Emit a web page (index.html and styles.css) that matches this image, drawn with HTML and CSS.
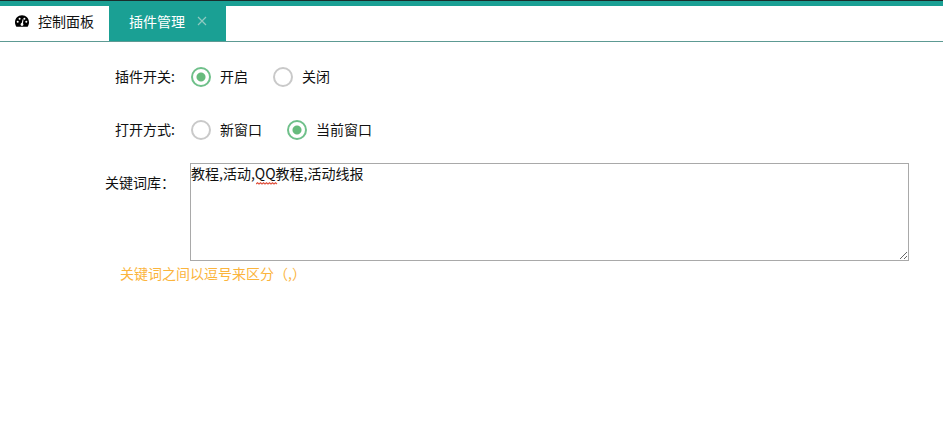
FILE: index.html
```html
<!DOCTYPE html>
<html lang="zh-CN">
  <head>
    <meta charset="UTF-8" />
    <title>插件管理</title>
    <link rel="stylesheet" href="styles.css">
  </head>

  <body>
    <!-- 顶部标签 -->
    <div class="tabs">
      <div class="tab">
        <svg class="tab-icon" width="14" height="12" viewBox="0 0 14 12">
          <path d="M7 0.200C3 0.200 0 3.300 0 7.300c0 1.600 0.500 3.100 1.400 4.400h11.200c0.900-1.300 1.400-2.800 1.400-4.400C14 3.300 11 0.200 7 0.200z" fill="#000" />
          <circle cx="2.700" cy="6.800" r="1" fill="#fff" />
          <circle cx="4.600" cy="3.800" r="1" fill="#fff" />
          <circle cx="9.400" cy="3.800" r="1" fill="#fff" />
          <circle cx="11.300" cy="6.800" r="1" fill="#fff" />
          <path d="M6.300 9.500 7.600 4.200 8.500 4.400 7.800 9.500z" fill="#fff" />
          <circle cx="7" cy="9.500" r="1.400" fill="#fff" />
        </svg>
        控制面板
      </div>
      <div class="tab active">
        插件管理
        <svg class="tab-close" width="10" height="10" viewBox="0 0 10 10">
          <path d="M1 1 9 9M9 1 1 9" stroke="#8fc9c0" stroke-width="1.200" fill="none" />
        </svg>
      </div>
    </div>

    <!-- 设置表单 -->
    <div class="form">
      <div class="row">
        <label class="row-label">插件开关:</label>
        <div class="radio checked">开启</div>
        <div class="radio">关闭</div>
      </div>

      <div class="row">
        <label class="row-label">打开方式:</label>
        <div class="radio">新窗口</div>
        <div class="radio checked">当前窗口</div>
      </div>

      <div class="keywords">
        <label class="keywords-label" for="keywords">关键词库：</label>
        <div class="keywords-box">
          <textarea id="keywords" spellcheck="false">教程,活动,QQ教程,活动线报</textarea>
          <svg class="squiggle" width="22" height="3" viewBox="0 0 22 3">
            <path d="M0 2 1.500 0.800 3 2 4.500 0.800 6 2 7.500 0.800 9 2 10.500 0.800 12 2 13.500 0.800 15 2 16.500 0.800 18 2 19.500 0.800 21 2" stroke="#e0503c" stroke-width="1.100" fill="none" />
          </svg>
        </div>
      </div>
      <p class="hint">关键词之间以逗号来区分（,）</p>
    </div>
  </body>
</html>
```

FILE: styles.css
```css
body {
  margin: 0;
  background-color: #fff;
  color: #111;
  font-family: "Noto Sans CJK SC", "Liberation Sans", sans-serif;
  font-size: 14px;
}

.tabs {
  display: flex;
  height: 35px;
  border-top: 1px solid #1a2e2c;
  padding-top: 5px;
  background-color: #fff;
  background-image: linear-gradient(#1aa094, #1aa094);
  background-repeat: no-repeat;
  background-size: 100% 5px;
  border-bottom: 1px solid #5d9a93;
}

.tab {
  display: flex;
  align-items: center;
  width: 109px;
  box-sizing: border-box;
  padding-left: 38px;
  padding-bottom: 5px;
  position: relative;
}

.tab-icon {
  position: absolute;
  left: 15px;
  top: 9px;
}

.tab.active {
  width: 117px;
  padding-left: 20px;
  background-color: #1aa094;
  color: #fff;
}

.tab-close {
  margin-left: 12px;
}

.form {
  padding-top: 15px;
}

.row {
  display: flex;
  align-items: center;
  height: 40px;
  margin-bottom: 13px;
}

.row-label {
  width: 175px;
  padding-bottom: 2px;
  text-align: right;
  margin-right: 16px;
}

.radio {
  display: flex;
  align-items: center;
  padding-bottom: 2px;
  margin-right: 25px;
}

.radio::before {
  content: "";
  width: 20px;
  height: 20px;
  box-sizing: border-box;
  border: 2px solid #c9c9c9;
  border-radius: 50%;
  margin-top: 2px;
  margin-right: 9px;
}

.radio.checked::before {
  border-color: #6fc08a;
  background: radial-gradient(circle, #66bb7c 0, #66bb7c 4px, #fff 5px);
}

.keywords {
  display: flex;
}

.keywords-label {
  width: 175px;
  margin-right: 15px;
  padding-top: 9px;
  text-align: right;
}

.keywords-box {
  position: relative;
  display: flex;
}

.keywords-box textarea {
  width: 719px;
  height: 98px;
  box-sizing: border-box;
  margin: 0;
  padding: 0;
  border: 1px solid #a9a9a9;
  outline: none;
  color: #111;
  font-family: inherit;
  font-size: 14px;
  line-height: 18px;
}

.squiggle {
  position: absolute;
  left: 66px;
  top: 19px;
}

.hint {
  margin: 2px 0 0 120px;
  color: #fbb43c;
}
```
